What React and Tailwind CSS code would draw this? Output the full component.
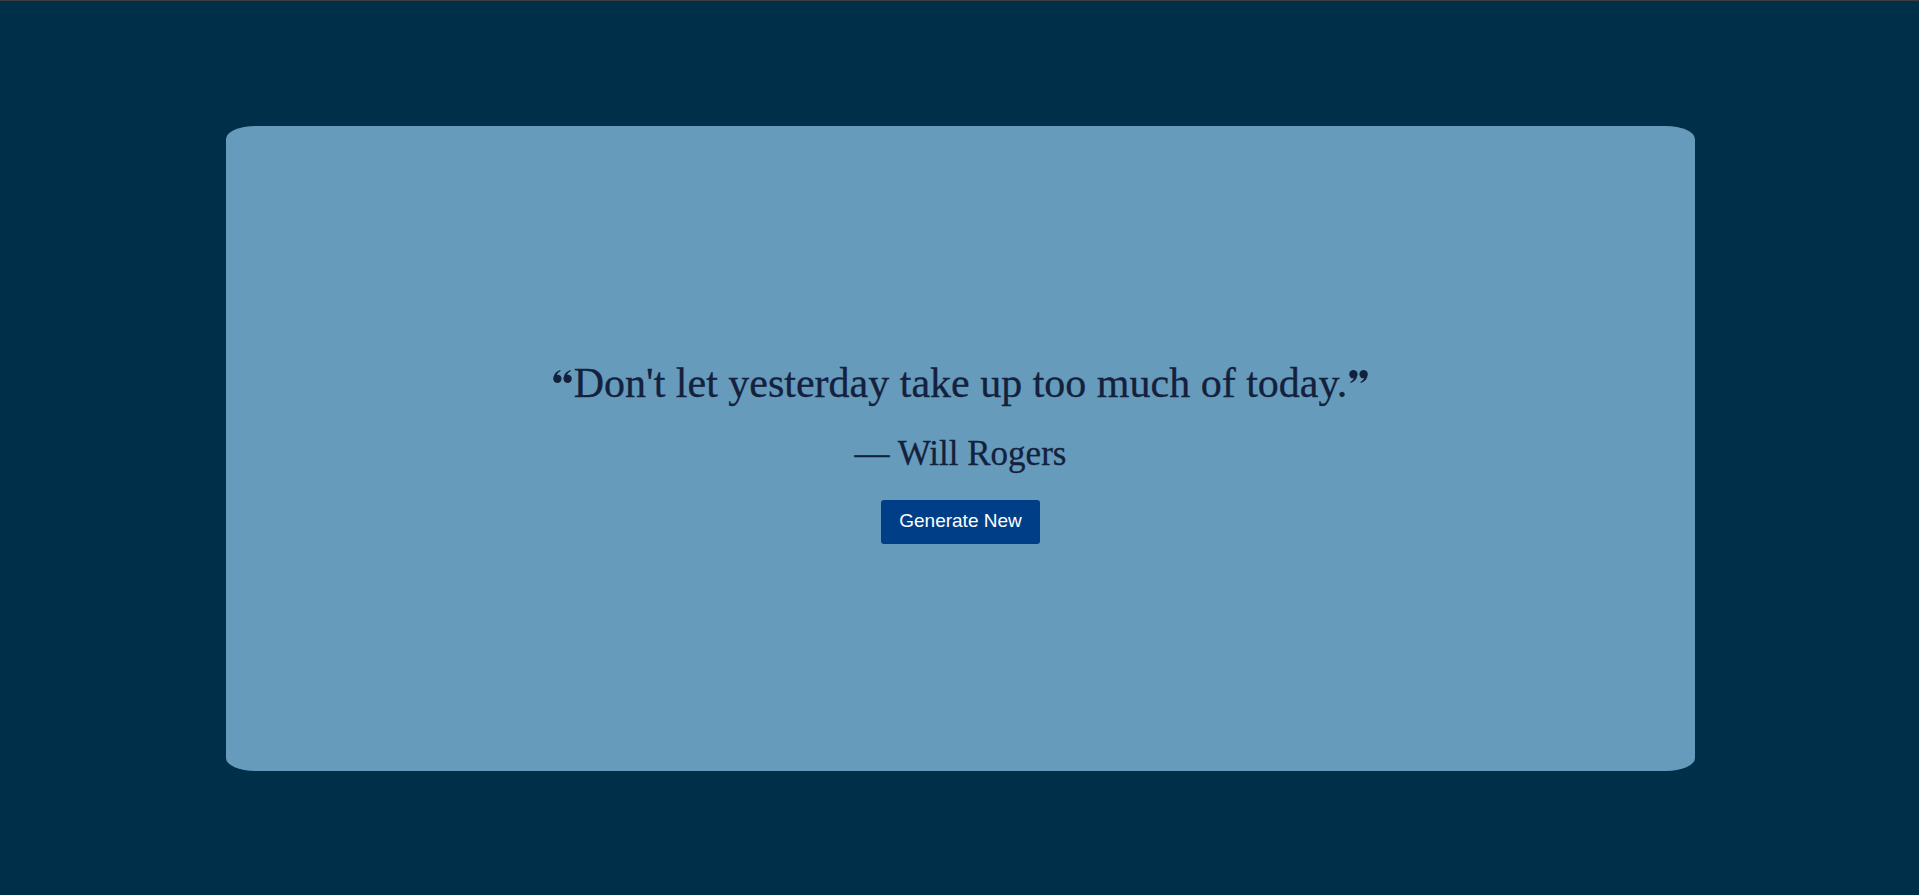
import React from "react";

function QuoteMark({ open = false }) {
    return (
        <svg
            viewBox="0 0 20 14"
            className={
                "inline-block w-[19px] h-[13px] [vertical-align:14px] fill-[#14213d] " +
                (open ? "rotate-180 mr-[2px]" : "ml-[2px]")
            }
        >
            <circle cx="4.5" cy="4.5" r="4.5" />
            <path d="M8.6 6.2 C8 10 5.6 12.6 1.6 14 L1 12.9 C3.6 11.6 5 9.6 5.2 8.4 Z" />
            <circle cx="15.5" cy="4.5" r="4.5" />
            <path d="M19.6 6.2 C19 10 16.6 12.6 12.6 14 L12 12.9 C14.6 11.6 16 9.6 16.2 8.4 Z" />
        </svg>
    );
}

export default function App() {
    const quote = {
        text: "Don't let yesterday take up too much of today.",
        author: "Will Rogers",
    };

    return (
        <div className="w-full h-[895px] bg-[#003049] border-t border-[#3d3d3d] pl-[2px] flex items-center justify-center">
            <div className="w-[1469px] h-[645px] bg-[#669bbc] rounded-[2%] pt-[5px] flex flex-col items-center justify-center gap-[25px] font-['Liberation_Serif',serif] text-[#14213d]">
                <p className="text-[42px] leading-[50px] [-webkit-text-stroke:0.3px_#14213d]">
                    <QuoteMark open />
                    {quote.text}
                    <QuoteMark />
                </p>
                <p className="text-[35px] leading-[42px] [-webkit-text-stroke:0.3px_#14213d]">
                    — {quote.author}
                </p>
                <button
                    type="button"
                    className="h-[44px] px-[18px] bg-[#003f88] text-white text-[19px] rounded-[3px] font-['Liberation_Sans',Arial,sans-serif]"
                >
                    Generate New
                </button>
            </div>
        </div>
    );
}
